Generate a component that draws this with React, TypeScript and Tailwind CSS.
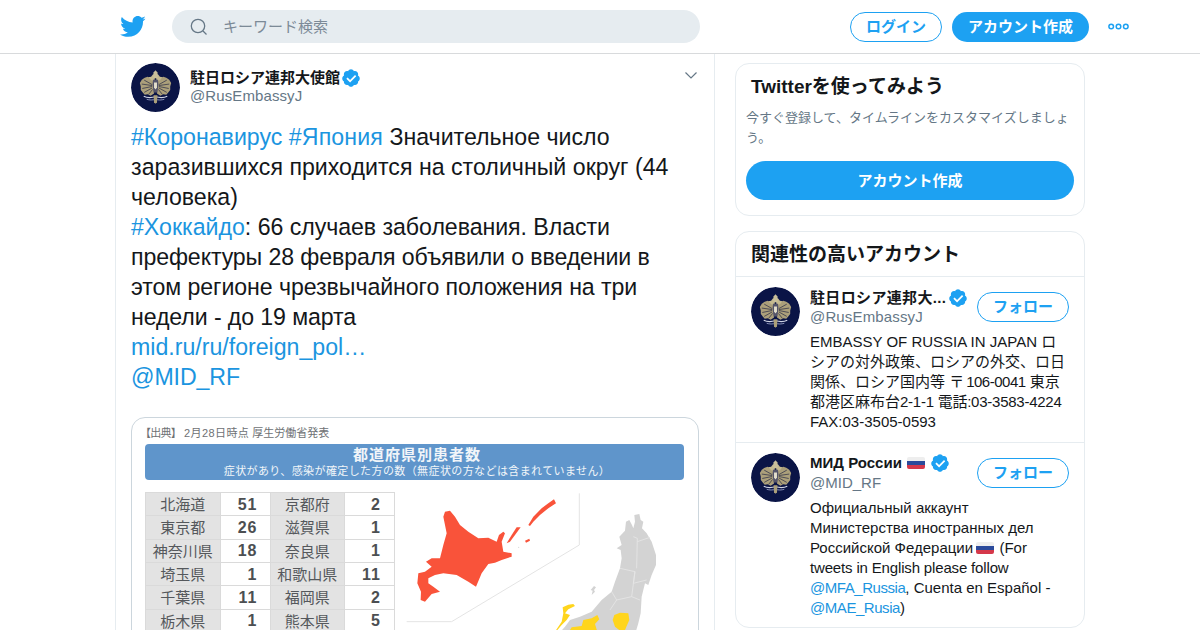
const sans = "font-['Liberation_Sans','Noto_Sans_CJK_JP',sans-serif]";

const Verified = ({ size = 20 }: { size?: number }) => (
  <svg width={size} height={size} viewBox="0 0 24 24" className="shrink-0">
    <path
      fill="#1da1f2"
      d="M22.5 12.5c0-1.58-.875-2.95-2.148-3.6.154-.435.238-.905.238-1.4 0-2.21-1.71-3.998-3.818-3.998-.47 0-.92.084-1.336.25C14.818 2.415 13.51 1.5 12 1.5s-2.816.917-3.437 2.25c-.415-.165-.866-.25-1.336-.25-2.11 0-3.818 1.79-3.818 4 0 .494.083.964.237 1.4-1.272.65-2.147 2.018-2.147 3.6 0 1.495.782 2.798 1.942 3.486-.02.17-.032.34-.032.514 0 2.21 1.708 4 3.818 4 .47 0 .92-.086 1.335-.25.62 1.334 1.926 2.25 3.437 2.25 1.512 0 2.818-.916 3.437-2.25.415.163.865.248 1.336.248 2.11 0 3.818-1.79 3.818-4 0-.174-.012-.344-.033-.513 1.158-.687 1.943-1.99 1.943-3.484z"
    />
    <path fill="#fff" d="M16.8 8.4 10.9 14.3 7.9 11.4 6.4 12.9 10.9 17.3 18.3 9.900z" />
  </svg>
);

const CrestWing = () => (
  <g>
    <path fill="#ab9f7a" d="M24 20 21 15.500 17 14 14 15 11 17 9 20.500 10 24 10 27.500 12 30 14 32.500 17 32 20 33.500 23.500 31z" />
    <path
      fill="none"
      stroke="#33344a"
      strokeWidth="0.800"
      d="M21.500 22 13.500 17.500M21.500 23 11 21.500M21.500 24 11.500 26M21.500 25.500 13.500 30M22 27 18 32"
    />
    <path fill="#c4b98f" d="M22.500 11.500 24.500 13 24 18 20.500 17.500 18 14.500 20.500 14z" />
  </g>
);

const Crest = ({ size }: { size: number }) => (
  <svg width={size} height={size} viewBox="0 0 50 50" className="shrink-0 rounded-full">
    <circle cx="25" cy="25" r="25" fill="#0a1446" />
    <CrestWing />
    <g transform="translate(50 0) scale(-1 1)">
      <CrestWing />
    </g>
    <path fill="#c9bf9a" d="M25 7.500l1.800 2 .7 3-.7 3h-3.600l-.7-3 .7-3z" />
    <path fill="#55556a" d="M22.500 17h5l.5 5-1 8h-4l-1-8z" />
    <path fill="#e4dfcc" d="M23.500 20h3v5l-1.500 2-1.500-2z" />
    <path fill="none" stroke="#cfd3e4" strokeWidth="1.100" d="M13 34c4 2 8 1.500 12 .5 4 1 8 1.500 12-.5" />
    <path fill="none" stroke="#9aa3c8" strokeWidth="0.900" d="M16 37c3 1 6 1 9 0 3 1 6 1 9 0" />
    <path fill="#ab9f7a" d="M23 33h4l-.5 7-1.500 1.500-1.500-1.500z" />
  </svg>
);

const RussiaFlag = ({ className }: { className: string }) => (
  <span className={`inline-flex h-[12px] w-[18px] shrink-0 flex-col overflow-hidden rounded-[2px] ${className}`}>
    <span className="h-1 bg-[#eeeeee]" />
    <span className="h-1 bg-[#2b4a9b]" />
    <span className="h-1 bg-[#d5384a]" />
  </span>
);

const rows = [
  ["北海道", "51", "京都府", "2"],
  ["東京都", "26", "滋賀県", "1"],
  ["神奈川県", "18", "奈良県", "1"],
  ["埼玉県", "1", "和歌山県", "11"],
  ["千葉県", "11", "福岡県", "2"],
  ["栃木県", "1", "熊本県", "5"],
];

const PrefCell = ({ children }: { children: string }) => (
  <div className="flex h-full w-[75px] items-center justify-center whitespace-nowrap border-r border-[#dadada] bg-[#e3e3e3] pt-[2px] text-[15px] text-[#55585c]">
    {children}
  </div>
);

const CountCell = ({ children, wide }: { children: string; wide?: boolean }) => (
  <div
    className={
      wide
        ? "flex h-full w-[50px] items-center justify-end border-r border-[#dadada] pr-[13px] pt-[1px] text-[16px] font-bold tracking-[1px] text-[#4c4f52]"
        : "flex h-full w-[50px] items-center justify-end border-r border-[#dadada] pr-[12px] pt-[1px] text-[16px] font-bold tracking-[1px] text-[#4c4f52]"
    }
  >
    {children}
  </div>
);

const PatientTable = () => (
  <div className="w-[250px] shrink-0 border-t border-l border-[#dadada]">
    {rows.map((r) => (
      <div key={r[0]} className="flex h-[23.330px] border-b border-[#dadada]">
        <PrefCell>{r[0]}</PrefCell>
        <CountCell>{r[1]}</CountCell>
        <PrefCell>{r[2]}</PrefCell>
        <CountCell wide>{r[3]}</CountCell>
      </div>
    ))}
  </div>
);

// coordinates below were read off 3x crops, hence the scale(1/3) groups
const JapanMap = () => (
  <svg width="303" height="146" viewBox="0 0 303 146" className="shrink-0">
    <g transform="translate(5 -82) scale(0.3333)">
      <path fill="none" stroke="#e4e4e4" strokeWidth="3" d="M538 250V405L155 635H20" />
      <path
        fill="#f9533a"
        d="M135 305 150 302 165 320 180 345 205 365 235 385 265 383 290 395 297 375 310 365 315 370 305 395 310 425 335 430 335 440 305 450 285 458 265 462 245 490 228 530 205 515 170 495 130 490 105 495 85 505 85 520 100 530 120 545 95 552 75 575 62 570 63 545 52 520 55 490 75 485 95 470 78 455 95 445 120 445 130 405 140 370 130 320z"
      />
      <path fill="#f9533a" d="M320 400 335 375 350 352 362 352 345 375 330 395z" />
      <path
        fill="#f9533a"
        d="M385 345 400 320 425 295 445 280 462 268 468 280 445 295 420 315 400 335 390 348z"
      />
      <path fill="#f9533a" d="M375 392 388 386 390 392 378 398z" />
      <circle cx="356" cy="412" r="2" fill="#d9d9d9" />
    </g>
    <g transform="translate(125 8) scale(0.3333)">
      <path
        fill="#d3d3d3"
        d="M318 65 328 60 336 75 340 85 345 65 343 45 358 42 362 60 370 65 366 85 380 100 395 125 408 165 408 195 395 225 385 255 375 250 365 290 362 340 355 370 340 420 100 420 135 380 150 360 180 350 215 335 245 300 275 275 285 245 300 205 305 175 302 150 290 145 305 135 298 110 315 92z"
      />
      <path
        fill="none"
        stroke="#e6e6e6"
        strokeWidth="2.500"
        d="M340 110 352 115 350 205M352 125 390 112M300 205 345 215 340 250 380 240M345 215 335 290 290 300 275 275M335 290 360 300M290 300 270 330"
      />
      <path fill="#d3d3d3" d="M222 258 228 262 222 270 225 275 215 285 218 272 212 270z" />
      <path
        fill="#ffd51d"
        d="M160 312 165 318 145 328 135 340 150 345 140 360 125 375 108 395 135 395 140 420 95 420 105 395 125 365 130 340 128 322 145 314z"
      />
      <path
        fill="#ffd51d"
        d="M190 360 215 355 232 345 238 358 225 372 232 395 225 420 160 420 150 390 155 382 185 378z"
      />
      <path fill="#ffd51d" d="M283 345 300 338 325 340 328 360 315 390 300 392 285 380 278 360z" />
    </g>
  </svg>
);

const TweetImage = () => (
  <div className="mt-[25px] h-[260px] overflow-hidden rounded-t-[14px] border border-[#ccd6dd] bg-white pl-[13px] pr-[14px]">
    <div className="-ml-[5px] pt-[8px] text-[11px] leading-[14px] text-[#6e7174]">
      <span className="tracking-[-0.75px]">【出典】</span> <span className="tracking-[0.4px]">2月28日時点</span> 厚生労働省発表
    </div>
    <div className="mt-[4px] flex h-[36px] flex-col items-center justify-center rounded-[4px] bg-[#5f95cb] pl-[5px] text-[#f1f5f9]">
      <div className="text-[15px] font-bold leading-[18px] tracking-[1px]">都道府県別患者数</div>
      <div className="text-[11px] leading-[14px] tracking-[0.4px]">症状があり、感染が確定した方の数（無症状の方などは含まれていません）</div>
    </div>
    <div className="mt-[12px] flex">
      <PatientTable />
      <JapanMap />
    </div>
  </div>
);

const Tweet = () => (
  <main className="h-[577px] w-[600px] shrink-0 overflow-hidden border-x border-[#e6ecf0] bg-white px-[15px] pt-[9px]">
    <div className="flex items-start">
      <Crest size={49} />
      <div className="ml-[10px] mt-[5px] min-w-0 flex-1">
        <div className="flex items-center gap-[1px] text-[15px] font-bold leading-[20px] text-[#14171a]">
          駐日ロシア連邦大使館
          <Verified />
        </div>
        <div className="-mt-px text-[15px] leading-[18px] tracking-[0.1px] text-[#657786]">@RusEmbassyJ</div>
      </div>
      <svg width="14" height="14" viewBox="0 0 14 14" className="mt-[5px] mr-px" fill="none" stroke="#657786" strokeWidth="1.200">
        <path d="M1.500 4.500 7 10l5.500-5.500" />
      </svg>
    </div>
    <div className="mt-[10px] text-[23.150px] leading-[30px] text-[#14171a]">
      <span className="text-[#1b95e0]">#Коронавирус</span> <span className="tracking-[0.15px] text-[#1b95e0]">#Япония</span> Значительное число
      <br />
      <span className="tracking-[0.02px]">заразившихся приходится на столичный округ (44</span>
      <br />
      человека)
      <br />
      <span className="text-[#1b95e0]">#Хоккайдо</span>: <span className="tracking-[-0.05px]">66 случаев заболевания. Власти</span>
      <br />
      <span className="tracking-[-0.11px]">префектуры 28 февраля объявили о введении в</span>
      <br />
      <span className="tracking-[-0.07px]">этом регионе чрезвычайного положения на три</span>
      <br />
      <span className="tracking-[-0.1px]">недели - до 19 марта</span>
      <br />
      <span className="text-[#1b95e0]">mid.ru/ru/foreign_pol…</span>
      <br />
      <span className="tracking-[-0.1px] text-[#1b95e0]">@MID_RF</span>
    </div>
    <TweetImage />
  </main>
);

const FollowButton = () => (
  <button
    type="button"
    className="flex h-[30px] w-[92px] shrink-0 items-center justify-center rounded-full border border-[#1da1f2] pt-px text-[15px] font-bold text-[#1da1f2]"
  >
    フォロー
  </button>
);

const Link = ({ children }: { children: string }) => <span className="tracking-[-0.45px] text-[#1b95e0]">{children}</span>;

const Sidebar = () => (
  <aside className="ml-[20px] flex w-[350px] shrink-0 flex-col gap-[15px] pt-[9px]">
    <section className="h-[153px] rounded-[14px] border border-[#e6ecf0] bg-white px-[10px]">
      <h2 className="ml-[5px] pt-[10px] text-[19px] font-bold leading-[25px] text-[#14171a]">Twitterを使ってみよう</h2>
      <p className="mt-[9px] text-[13px] leading-[20px] text-[#657786]">今すぐ登録して、タイムラインをカスタマイズしましょう。</p>
      <button
        type="button"
        className="mt-[13px] flex h-[39px] w-full items-center justify-center rounded-full bg-[#1da1f2] pt-px text-[15px] font-bold text-white"
      >
        アカウント作成
      </button>
    </section>
    <section className="h-[397px] rounded-[14px] border border-[#e6ecf0] bg-white">
      <h2 className="border-b border-[#e6ecf0] px-[15px] pb-[8px] pt-[9px] text-[19px] font-bold leading-[27px] text-[#14171a]">
        関連性の高いアカウント
      </h2>
      <div className="flex gap-[10px] border-b border-[#e6ecf0] px-[15px] py-[10px]">
        <Crest size={49} />
        <div className="min-w-0 flex-1">
          <div className="flex items-start justify-between">
            <div>
              <div className="flex items-center gap-[2px] pt-px text-[15px] font-bold leading-[20px] text-[#14171a]">
                <span className="tracking-[0.35px]">駐日ロシア連邦大...</span>
                <Verified />
              </div>
              <div className="-mt-px text-[15px] leading-[20px] tracking-[0.15px] text-[#657786]">@RusEmbassyJ</div>
            </div>
            <div className="pt-[5px]">
              <FollowButton />
            </div>
          </div>
          <p className="mt-[5px] text-[15px] leading-[20px] text-[#14171a]">
            EMBASSY OF RUSSIA IN JAPAN ロ
            <br />
            シアの対外政策、ロシアの外交、ロ日
            <br />
            関係、ロシア国内等 〒<span className="ml-[2px] tracking-[-0.5px]">106-0041</span> 東京
            <br />
            都港区麻布台<span className="tracking-[-0.25px]">2-1-1 電話:03-3583-4224</span>
            <br />
            FAX:03-3505-0593
          </p>
        </div>
      </div>
      <div className="flex gap-[10px] px-[15px] pt-[10px]">
        <Crest size={49} />
        <div className="min-w-0 flex-1">
          <div className="flex items-start justify-between">
            <div>
              <div className="flex items-center gap-[3px] text-[15px] font-bold leading-[20px] text-[#14171a]">
                МИД России
                <RussiaFlag className="mx-[2px]" />
                <Verified />
              </div>
              <div className="text-[15px] leading-[20px] text-[#657786]">@MID_RF</div>
            </div>
            <div className="pt-[5px]">
              <FollowButton />
            </div>
          </div>
          <p className="mt-[5px] text-[15px] leading-[20px] text-[#14171a]">
            Официальный аккаунт
            <br />
            Министерства иностранных дел
            <br />
            Российской Федерации <RussiaFlag className="-ml-px mr-[1px] mt-[4px] align-top" /> (For
            <br />
            <span className="tracking-[-0.16px]">tweets in English please follow</span>
            <br />
            <Link>@MFA_Russia</Link>, Cuenta en Español -
            <br />
            <Link>@MAE_Rusia</Link>)
          </p>
        </div>
      </div>
    </section>
  </aside>
);

const Navbar = () => (
  <header className="h-[54px] w-full border-b border-[#d8dadc] bg-white">
    <div className="flex h-full items-center pl-[119px] pr-[71px]">
      <svg width="27" height="27" viewBox="0 0 24 24" className="shrink-0" fill="#1da1f2">
        <path d="M23.643 4.937c-.835.37-1.732.62-2.675.733.962-.576 1.7-1.490 2.048-2.578-.9.534-1.897.922-2.958 1.130-.85-.904-2.060-1.470-3.400-1.470-2.572 0-4.658 2.086-4.658 4.660 0 .364.042.718.120 1.060-3.873-.195-7.304-2.050-9.602-4.868-.4.690-.63 1.490-.63 2.342 0 1.616.823 3.043 2.072 3.878-.764-.025-1.482-.234-2.110-.583v.060c0 2.257 1.605 4.140 3.737 4.568-.392.106-.803.162-1.227.162-.3 0-.593-.028-.877-.082.593 1.850 2.313 3.198 4.352 3.234-1.595 1.250-3.604 1.995-5.786 1.995-.376 0-.747-.022-1.112-.065 2.062 1.323 4.510 2.093 7.140 2.093 8.570 0 13.255-7.098 13.255-13.254 0-.2-.005-.402-.014-.602.910-.658 1.700-1.477 2.323-2.410z" />
      </svg>
      <div className="ml-[26px] flex h-[33px] w-[528px] shrink-0 items-center rounded-full bg-[#e6ecf0] pl-[18px]">
        <svg width="18" height="18" viewBox="0 0 18 18" fill="none" stroke="#657786" strokeWidth="1.300">
          <circle cx="8" cy="8" r="6.700" />
          <path d="M13 13l3.500 3.500" />
        </svg>
        <span className="ml-[15px] pt-px text-[15px] text-[#7c8a97]">キーワード検索</span>
      </div>
      <div className="ml-auto flex items-center">
        <button
          type="button"
          className="flex h-[30px] w-[92px] items-center justify-center rounded-full border border-[#1da1f2] pt-px text-[15px] font-bold text-[#1da1f2]"
        >
          ログイン
        </button>
        <button
          type="button"
          className="ml-[10px] flex h-[30px] w-[137px] items-center justify-center rounded-full bg-[#1da1f2] pt-px text-[15px] font-bold text-white"
        >
          アカウント作成
        </button>
        <svg width="21" height="7" viewBox="0 0 21 7" className="ml-[19px]" fill="none" stroke="#1da1f2" strokeWidth="1.500">
          <circle cx="3.200" cy="3.500" r="2.300" />
          <circle cx="10.500" cy="3.500" r="2.300" />
          <circle cx="17.800" cy="3.500" r="2.300" />
        </svg>
      </div>
    </div>
  </header>
);

export default function App() {
  return (
    <div className={`h-[630px] w-[1200px] overflow-hidden bg-white ${sans}`}>
      <Navbar />
      <div className="ml-[115px] flex">
        <Tweet />
        <Sidebar />
      </div>
    </div>
  );
}
